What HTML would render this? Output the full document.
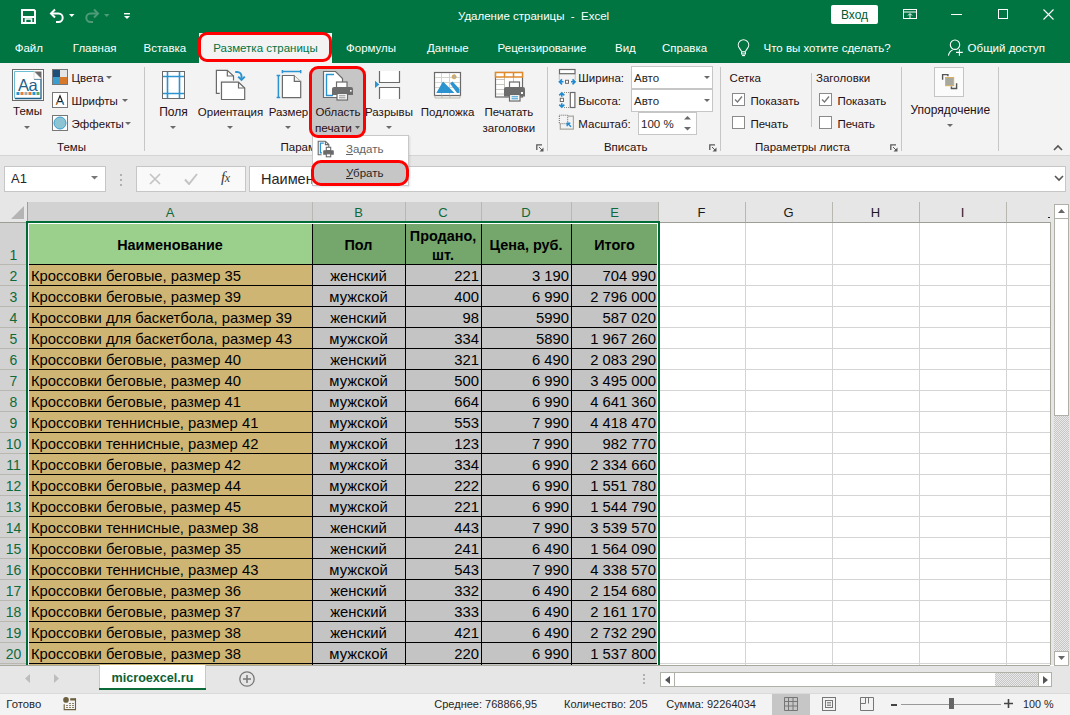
<!DOCTYPE html>
<html><head><meta charset="utf-8"><style>
*{margin:0;padding:0}
html,body{width:1070px;height:715px;overflow:hidden;background:#fff;position:relative}
body>div,body>svg{position:absolute}
.t{position:absolute;white-space:nowrap;line-height:1.15;font-family:"Liberation Sans",sans-serif}
</style></head><body>
<div style="left:0px;top:0px;width:1070px;height:63px;background:#007542"></div>
<svg style="position:absolute;left:21px;top:9px" width="15" height="15" viewBox="0 0 15 15"><path d="M1 1h12l1 1v12H1z" fill="none" stroke="#fff" stroke-width="2"/><path d="M1 8h13" stroke="#fff" stroke-width="2"/><path d="M4.5 14v-4h6v4" fill="none" stroke="#fff" stroke-width="1.6"/></svg>
<svg style="position:absolute;left:49px;top:8px" width="16" height="15" viewBox="0 0 16 15"><path d="M2 5.5h7.5a4.2 4.2 0 0 1 0 8.4H7" fill="none" stroke="#fff" stroke-width="2"/><path d="M6 1.5L2 5.5l4 4" fill="none" stroke="#fff" stroke-width="2"/></svg>
<svg style="position:absolute;left:69px;top:14px" width="6" height="4" viewBox="0 0 6 4"><path d="M0 0h5.5l-2.75 3z" fill="#fff"/></svg>
<svg style="position:absolute;left:84px;top:8px" width="16" height="15" viewBox="0 0 16 15"><path d="M14 5.5H6.5a4.2 4.2 0 0 0 0 8.4H9" fill="none" stroke="#4f9a78" stroke-width="2"/><path d="M10 1.5l4 4-4 4" fill="none" stroke="#4f9a78" stroke-width="2"/></svg>
<svg style="position:absolute;left:104px;top:14px" width="6" height="4" viewBox="0 0 6 4"><path d="M0 0h5.5l-2.75 3z" fill="#4f9a78"/></svg>
<svg style="position:absolute;left:124px;top:13px" width="6" height="7" viewBox="0 0 6 7"><rect x="0" y="0" width="6" height="1.4" fill="#fff"/><path d="M0 3h6l-3 3z" fill="#fff"/></svg>
<div class="t" style="left:458px;top:9.59px;font-size:11.5px;color:#fff;">Удаление страницы &nbsp;- &nbsp;Excel</div>
<div style="left:831px;top:5px;width:47px;height:19px;background:#fff;border-radius:2px"></div>
<div class="t" style="left:654.5px;width:400px;text-align:center;top:8.64px;font-size:12px;color:#005c30;">Вход</div>
<svg style="position:absolute;left:903px;top:9px" width="15" height="11" viewBox="0 0 15 11"><rect x="0.5" y="0.5" width="13" height="9" fill="none" stroke="#fff"/><path d="M1 3h12" stroke="#fff"/><path d="M7 9V5M5 6.5l2-2 2 2" fill="none" stroke="#fff"/></svg>
<div style="left:951px;top:14px;width:11px;height:1px;background:#fff"></div>
<div style="left:998px;top:9px;width:10px;height:10px;border:1px solid #fff;box-sizing:border-box"></div>
<svg style="position:absolute;left:1043px;top:9px" width="11" height="11" viewBox="0 0 11 11"><path d="M0.5 0.5l10 10M10.5 0.5l-10 10" stroke="#fff" stroke-width="1.1"/></svg>
<div class="t" style="left:14.7px;top:41.59px;font-size:11.5px;color:#fff;">Файл</div>
<div class="t" style="left:72.8px;top:41.59px;font-size:11.5px;color:#fff;">Главная</div>
<div class="t" style="left:143.5px;top:41.59px;font-size:11.5px;color:#fff;">Вставка</div>
<div class="t" style="left:346px;top:41.59px;font-size:11.5px;color:#fff;">Формулы</div>
<div class="t" style="left:427px;top:41.59px;font-size:11.5px;color:#fff;">Данные</div>
<div class="t" style="left:497.6px;top:41.59px;font-size:11.5px;color:#fff;">Рецензирование</div>
<div class="t" style="left:615px;top:41.59px;font-size:11.5px;color:#fff;">Вид</div>
<div class="t" style="left:662px;top:41.59px;font-size:11.5px;color:#fff;">Справка</div>
<div style="left:199px;top:33px;width:133px;height:30px;background:#f3f3f3"></div>
<div class="t" style="left:65.5px;width:400px;text-align:center;top:41.59px;font-size:11.5px;color:#007542;">Разметка страницы</div>
<div style="left:198px;top:32px;width:134px;height:30px;border:3px solid #ff0000;border-radius:9px;box-sizing:border-box"></div>
<svg style="position:absolute;left:737px;top:39px" width="13" height="18" viewBox="0 0 13 18"><path d="M4.5 12.2L2.4 9.2A5.2 5.2 0 1 1 10.6 9.2L8.5 12.2" fill="none" stroke="#fff" stroke-width="1.1"/><rect x="4.6" y="12.8" width="3.8" height="2.2" fill="none" stroke="#fff" stroke-width="1.1"/><path d="M5 16.6h3" stroke="#fff" stroke-width="1.1"/></svg>
<div class="t" style="left:763.5px;top:41.59px;font-size:11.5px;color:#fff;">Что вы хотите сделать?</div>
<svg style="position:absolute;left:947px;top:39px" width="17" height="18" viewBox="0 0 17 18"><circle cx="8" cy="5.7" r="4.7" fill="none" stroke="#fff" stroke-width="1.1"/><path d="M1.4 16.6Q2.2 12.2 5.6 10.9" fill="none" stroke="#fff" stroke-width="1.1"/><path d="M9 13.4h6.8M12.4 10.2v6.6" stroke="#fff" stroke-width="1.1"/></svg>
<div class="t" style="left:967.6px;top:41.59px;font-size:11.5px;color:#fff;">Общий доступ</div>
<div style="left:0px;top:63px;width:1070px;height:92px;background:#f3f3f3"></div>
<div style="left:0px;top:155px;width:1070px;height:1px;background:#d5d5d5"></div>
<div style="left:144px;top:67px;width:1px;height:84px;background:#c6c6c6"></div>
<div style="left:547px;top:67px;width:1px;height:84px;background:#c6c6c6"></div>
<div style="left:720px;top:67px;width:1px;height:84px;background:#c6c6c6"></div>
<div style="left:901px;top:67px;width:1px;height:84px;background:#c6c6c6"></div>
<div style="left:998px;top:67px;width:1px;height:84px;background:#c6c6c6"></div>
<svg style="position:absolute;left:12px;top:69px" width="32" height="32" viewBox="0 0 32 32"><rect x="0.5" y="0.5" width="31" height="31" fill="#fff" stroke="#6a6a6a"/><path d="M2.5 29.5V2.5H22" fill="none" stroke="#5ab8d0" stroke-width="0.9"/><path d="M22 10H29V29.5H3" fill="none" stroke="#1f5f8a" stroke-width="1.3"/><path d="M22 2.5H29.5V10z" fill="#6a6a6a"/><path d="M22 2.5V10H29.5z" fill="#fff" stroke="#bbb" stroke-width="0.5"/><text x="6" y="21.5" font-family="Liberation Sans" font-size="16.5" fill="#1f5f8a" letter-spacing="-0.6">Aa</text><rect x="4.5" y="23" width="3" height="3" fill="#2b93cf"/><rect x="8.5" y="23" width="3" height="3" fill="#e07f2f"/><rect x="12.5" y="23" width="3" height="3" fill="#aaa"/><rect x="16.5" y="23" width="3" height="3" fill="#e07f2f"/><rect x="20.5" y="23" width="3" height="3" fill="#2b93cf"/><rect x="24.5" y="23" width="3" height="3" fill="#5ea65e"/></svg>
<div class="t" style="left:-172.5px;width:400px;text-align:center;top:104.59px;font-size:11.5px;color:#261014;">Темы</div>
<svg style="position:absolute;left:24px;top:126px" width="7" height="4" viewBox="0 0 7 4"><path d="M0 0h6l-3 3z" fill="#6a6a6a"/></svg>
<svg style="position:absolute;left:52px;top:69px" width="16" height="16" viewBox="0 0 16 16"><rect x="0" y="0" width="8" height="8" fill="#1d4f7a"/><rect x="8" y="0" width="8" height="8" fill="#e5e5e5"/><rect x="0" y="8" width="8" height="8" fill="#3a9ed0"/><rect x="8" y="8" width="8" height="8" fill="#d8782a"/><rect x="0.5" y="0.5" width="15" height="15" fill="none" stroke="#777"/></svg>
<div class="t" style="left:71.6px;top:71.59px;font-size:11.5px;color:#261014;">Цвета</div>
<svg style="position:absolute;left:106px;top:76px" width="6" height="4" viewBox="0 0 6 4"><path d="M0 0h6l-3 3z" fill="#6a6a6a"/></svg>
<svg style="position:absolute;left:52px;top:92px" width="16" height="16" viewBox="0 0 16 16"><rect x="0.5" y="0.5" width="15" height="15" fill="#fff" stroke="#777"/><path d="M4.3 12.8L8 3.8l3.7 9M5.6 9.6h4.8" fill="none" stroke="#1d1d1d" stroke-width="1.2"/><path d="M4.3 12.8l1.3-3.2" stroke="#e07f2f" stroke-width="1.2"/><path d="M11.7 12.8l-1.3-3.2" stroke="#2b93cf" stroke-width="1.2"/></svg>
<div class="t" style="left:71.6px;top:94.59px;font-size:11.5px;color:#261014;">Шрифты</div>
<svg style="position:absolute;left:122px;top:99px" width="6" height="4" viewBox="0 0 6 4"><path d="M0 0h6l-3 3z" fill="#6a6a6a"/></svg>
<svg style="position:absolute;left:52px;top:115px" width="16" height="16" viewBox="0 0 16 16"><rect x="0.5" y="0.5" width="15" height="15" fill="#fff" stroke="#777"/><circle cx="8" cy="8" r="6" fill="#8cc4d4" stroke="#3a9ed0"/></svg>
<div class="t" style="left:71.6px;top:117.59px;font-size:11.5px;color:#261014;">Эффекты</div>
<svg style="position:absolute;left:125px;top:122px" width="6" height="4" viewBox="0 0 6 4"><path d="M0 0h6l-3 3z" fill="#6a6a6a"/></svg>
<div class="t" style="left:-128.5px;width:400px;text-align:center;top:140.59px;font-size:11.5px;color:#261014;">Темы</div>
<svg style="position:absolute;left:162px;top:71px" width="23" height="28" viewBox="0 0 23 28"><rect x="0.5" y="0.5" width="22" height="27" fill="#fff" stroke="#6a6a6a"/><path d="M5.5 1v26M17.5 1v26M1 5.5h21M1 22.5h21" stroke="#2b93cf" stroke-width="1.6"/></svg>
<div class="t" style="left:-26.5px;width:400px;text-align:center;top:106.14px;font-size:12px;color:#261014;">Поля</div>
<svg style="position:absolute;left:170px;top:126px" width="7" height="4" viewBox="0 0 7 4"><path d="M0 0h6l-3 3z" fill="#6a6a6a"/></svg>
<svg style="position:absolute;left:214px;top:69px" width="33" height="33" viewBox="0 0 33 33"><path d="M2.4 1.4H13.3L19.5 7V24.4H2.4Z" fill="#fff" stroke="#6a6a6a" stroke-width="1.2"/><path d="M13.3 1.4V7H19.5" fill="none" stroke="#6a6a6a" stroke-width="1.2"/><path d="M7.5 13.2H24.5L30.7 19V30.5H7.5Z" fill="#fff" stroke="#f3f3f3" stroke-width="3.5"/><path d="M7.5 13.2H24.5L30.7 19V30.5H7.5Z" fill="#fff" stroke="#6a6a6a" stroke-width="1.2"/><path d="M24.5 13.2V19H30.7" fill="none" stroke="#6a6a6a" stroke-width="1.2"/><path d="M21.2 3H23.2A4.3 4.3 0 0 1 27.5 7.3V10.5" fill="none" stroke="#2b93cf" stroke-width="2"/><path d="M24.2 7.6L27.5 10.9L30.8 7.6" fill="none" stroke="#2b93cf" stroke-width="2"/></svg>
<div class="t" style="left:30.5px;width:400px;text-align:center;top:105.59px;font-size:11.5px;color:#261014;">Ориентация</div>
<svg style="position:absolute;left:227px;top:126px" width="7" height="4" viewBox="0 0 7 4"><path d="M0 0h6l-3 3z" fill="#6a6a6a"/></svg>
<svg style="position:absolute;left:276px;top:70px" width="28" height="30" viewBox="0 0 28 30"><path d="M6.4 5.5H18.3V11.3H24.7V27.6H6.4Z" fill="#fff" stroke="#6a6a6a" stroke-width="1.2"/><path d="M18.3 5.5L24.7 11.3" stroke="#a8a8a0" stroke-width="1"/><path d="M6.4 1.6H24.7M6.4 0V3.2M24.7 0V3.2M2.4 5.5V27.6M0.6 5.5H4.2M0.6 27.6H4.2" fill="none" stroke="#2b93cf" stroke-width="1.5"/></svg>
<div class="t" style="left:88.5px;width:400px;text-align:center;top:105.59px;font-size:11.5px;color:#261014;">Размер</div>
<svg style="position:absolute;left:285px;top:126px" width="7" height="4" viewBox="0 0 7 4"><path d="M0 0h6l-3 3z" fill="#6a6a6a"/></svg>
<div style="left:310px;top:67px;width:55px;height:70px;background:#c6c6c6;border-radius:7px"></div>
<svg style="position:absolute;left:322px;top:70px" width="33" height="32" viewBox="0 0 33 32"><path d="M1.5 1.5h12l7 7v19h-19z" fill="#fff" stroke="#6a6a6a" stroke-width="1.2"/><path d="M12 4.5H4.5V25.5H11" fill="none" stroke="#2b93cf" stroke-width="1.4"/><rect x="14.5" y="12" width="10.5" height="6" fill="#fff" stroke="#6a6a6a" stroke-width="1.2"/><path d="M13 18.5h13" stroke="#2b93cf" stroke-width="1.4"/><path d="M12 17h17a2 2 0 0 1 2 2v6H10v-6a2 2 0 0 1 2-2z" fill="#6d6d6d"/><rect x="15" y="23.5" width="10.5" height="6.5" fill="#fff" stroke="#6a6a6a" stroke-width="1.2"/><path d="M17 25.8h6.5M17 27.8h6.5" stroke="#6a6a6a" stroke-width="0.8"/><rect x="28" y="20" width="1.6" height="1.6" fill="#fff"/></svg>
<div class="t" style="left:138px;width:400px;text-align:center;top:105.59px;font-size:11.5px;color:#261014;">Область</div>
<div class="t" style="left:133.39999999999998px;width:400px;text-align:center;top:121.91999999999999px;font-size:11.8px;color:#261014;">печати</div>
<svg style="position:absolute;left:355px;top:126px" width="6" height="4" viewBox="0 0 6 4"><path d="M0 0h5l-2.5 3z" fill="#555"/></svg>
<svg style="position:absolute;left:374px;top:70px" width="27" height="30" viewBox="0 0 27 30"><rect x="5.5" y="1" width="20" height="11.5" fill="#fff"/><rect x="5.5" y="17.5" width="20" height="11.5" fill="#fff"/><path d="M5.5 1V12.5H25.5V1M5.5 29V17.5H25.5V29" fill="none" stroke="#6a6a6a" stroke-width="1.2"/><path d="M1 10.8L5.3 14.4L1 18z" fill="#2b93cf"/></svg>
<div class="t" style="left:189px;width:400px;text-align:center;top:105.59px;font-size:11.5px;color:#261014;">Разрывы</div>
<svg style="position:absolute;left:386px;top:126px" width="7" height="4" viewBox="0 0 7 4"><path d="M0 0h6l-3 3z" fill="#6a6a6a"/></svg>
<svg style="position:absolute;left:433px;top:71px" width="30" height="29" viewBox="0 0 30 29"><rect x="1.5" y="1.5" width="26" height="23" fill="#fff" stroke="#6a6a6a" stroke-width="1.2"/><path d="M8.5 2v22M16.5 2v22M2 6.5h25M2 11.5h25M2 16.5h25" stroke="#d0d0c8" stroke-width="0.9"/><path d="M3.3 22L10 10.4L21.5 22z" fill="#2b93cf"/><path d="M17 12.5L19.5 10.5L26.5 18V22H24z" fill="#2b93cf"/><circle cx="21.1" cy="5.8" r="2" fill="#b0b0a8" stroke="#d8a848" stroke-width="1"/><path d="M2 24.5v2.5h25v-2.5M9 24.5v2.5M17 24.5v2.5" fill="none" stroke="#b8b8a8" stroke-width="0.9"/></svg>
<div class="t" style="left:247.60000000000002px;width:400px;text-align:center;top:105.59px;font-size:11.5px;color:#261014;">Подложка</div>
<svg style="position:absolute;left:494px;top:71px" width="32" height="31" viewBox="0 0 32 31"><rect x="1.5" y="1.5" width="27" height="24.5" fill="#fff" stroke="#6a6a6a" stroke-width="1.2"/><path d="M2 8.5h9M2 13.5h9M2 18.5h9M2 23h9M10.5 6v13M19.5 6v6" stroke="#c0c0b8" stroke-width="0.9"/><rect x="1.5" y="1.5" width="27" height="4.5" fill="#fff" stroke="#e08a2c" stroke-width="1.5"/><path d="M10.5 1.5v4.5M19.5 1.5v4.5" stroke="#e08a2c" stroke-width="1.5"/><rect x="15.5" y="11" width="10" height="7.5" fill="#fff" stroke="#6a6a6a" stroke-width="1.2"/><path d="M14 18.5h13" stroke="#2b93cf" stroke-width="1.4"/><path d="M12 16h17a2 2 0 0 1 2 2v7.5H10V18a2 2 0 0 1 2-2z" fill="#6d6d6d"/><rect x="15.5" y="23.5" width="10.5" height="6.5" fill="#fff" stroke="#6a6a6a" stroke-width="1.2"/><path d="M17.5 25.8h6.5M17.5 27.8h6.5" stroke="#2b93cf" stroke-width="1"/><rect x="27" y="21" width="2" height="2" fill="#fff"/></svg>
<div class="t" style="left:308.9px;width:400px;text-align:center;top:105.59px;font-size:11.5px;color:#261014;">Печатать</div>
<div class="t" style="left:308.8px;width:400px;text-align:center;top:121.59px;font-size:11.5px;color:#261014;">заголовки</div>
<div class="t" style="left:280.5px;top:140.59px;font-size:11.5px;color:#261014;">Параметры страницы</div>
<svg style="position:absolute;left:536px;top:144px" width="8" height="8" viewBox="0 0 8 8"><path d="M0.8 6V0.8H6" fill="none" stroke="#5a5a5a" stroke-width="1.3"/><path d="M7.5 3.5V7.5H3.5z" fill="#5a5a5a"/><path d="M3 3l3 3" stroke="#5a5a5a" stroke-width="1"/></svg>
<svg style="position:absolute;left:558px;top:68px" width="19" height="18" viewBox="0 0 19 18"><rect x="1.5" y="1.5" width="15.5" height="4.2" fill="#fff" stroke="#6a6a6a" stroke-width="1.2"/><path d="M1.3 6.5v6M17.2 6.5v6" stroke="#8a8a8a" stroke-dasharray="1 1" stroke-width="1"/><path d="M1.5 13.8H5.5M13 13.8H17M4 11.3L1.4 13.8L4 16.3M14.5 11.3L17.1 13.8L14.5 16.3" fill="none" stroke="#1f8ad0" stroke-width="1.6"/><rect x="7.5" y="12.3" width="3" height="3" fill="#fff" stroke="#6a6a6a" stroke-width="1"/></svg>
<div class="t" style="left:578.3px;top:71.59px;font-size:11.5px;color:#261014;">Ширина:</div>
<svg style="position:absolute;left:558px;top:91px" width="19" height="18" viewBox="0 0 19 18"><rect x="12.3" y="1.5" width="4.6" height="15" fill="#fff" stroke="#6a6a6a" stroke-width="1.2"/><path d="M6 1.5h5.5M6 16.5h5.5" stroke="#8a8a8a" stroke-dasharray="1 1" stroke-width="1"/><path d="M3.8 2V5.8M3.8 12.2V16M1.3 4.4L3.8 1.8L6.3 4.4M1.3 13.6L3.8 16.2L6.3 13.6" fill="none" stroke="#1f8ad0" stroke-width="1.6"/><rect x="2.3" y="7.3" width="3.2" height="3.2" fill="#fff" stroke="#6a6a6a" stroke-width="1"/></svg>
<div class="t" style="left:578.3px;top:94.59px;font-size:11.5px;color:#261014;">Высота:</div>
<svg style="position:absolute;left:558px;top:114px" width="17" height="17" viewBox="0 0 17 17"><path d="M9.7 2.2H15.4V15.1H2.3V9.8" fill="none" stroke="#a8a8a0" stroke-width="1.2"/><rect x="1.3" y="1.2" width="8.4" height="8.5" fill="#f3f3f3" stroke="#6a6a6a" stroke-dasharray="1 1" stroke-width="1"/><path d="M13.1 12.7L9.4 9.2M9.2 12.3V9.2H12.3" fill="none" stroke="#1f8ad0" stroke-width="1.4"/></svg>
<div class="t" style="left:578.3px;top:117.59px;font-size:11.5px;color:#261014;">Масштаб:</div>
<div style="left:631px;top:66px;width:82px;height:23px;background:#fff;border:1px solid #c6c6c6;box-sizing:border-box"></div>
<div class="t" style="left:634px;top:71.59px;font-size:11.5px;color:#262626;">Авто</div>
<svg style="position:absolute;left:704px;top:76px" width="6" height="4" viewBox="0 0 6 4"><path d="M0 0h6l-3 3z" fill="#6a6a6a"/></svg>
<div style="left:631px;top:89px;width:82px;height:23px;background:#fff;border:1px solid #c6c6c6;box-sizing:border-box"></div>
<div class="t" style="left:634px;top:94.59px;font-size:11.5px;color:#262626;">Авто</div>
<svg style="position:absolute;left:704px;top:99px" width="6" height="4" viewBox="0 0 6 4"><path d="M0 0h6l-3 3z" fill="#6a6a6a"/></svg>
<div style="left:638px;top:112px;width:59px;height:23px;background:#fff;border:1px solid #c6c6c6;box-sizing:border-box"></div>
<div class="t" style="left:641px;top:117.59px;font-size:11.5px;color:#262626;">100 %</div>
<svg style="position:absolute;left:684px;top:116px" width="7" height="15" viewBox="0 0 7 15"><path d="M0 3.5L3.5 0L7 3.5z" fill="#6a6a6a"/><path d="M0 11L3.5 14.5L7 11z" fill="#6a6a6a"/></svg>
<div class="t" style="left:425.70000000000005px;width:400px;text-align:center;top:140.59px;font-size:11.5px;color:#261014;">Вписать</div>
<svg style="position:absolute;left:709px;top:144px" width="8" height="8" viewBox="0 0 8 8"><path d="M0.8 6V0.8H6" fill="none" stroke="#5a5a5a" stroke-width="1.3"/><path d="M7.5 3.5V7.5H3.5z" fill="#5a5a5a"/><path d="M3 3l3 3" stroke="#5a5a5a" stroke-width="1"/></svg>
<div class="t" style="left:729.6px;top:71.59px;font-size:11.5px;color:#261014;">Сетка</div>
<div class="t" style="left:816px;top:71.59px;font-size:11.5px;color:#261014;">Заголовки</div>
<div style="left:732px;top:93px;width:13px;height:13px;background:#fff;border:1px solid #8a8a8a;box-sizing:border-box"></div>
<svg style="position:absolute;left:734px;top:95px" width="9" height="9" viewBox="0 0 9 9"><path d="M1 4.5l2.5 2.5L8 1.5" fill="none" stroke="#777" stroke-width="1.3"/></svg>
<div style="left:732px;top:116px;width:13px;height:13px;background:#fff;border:1px solid #8a8a8a;box-sizing:border-box"></div>
<div style="left:819px;top:93px;width:13px;height:13px;background:#fff;border:1px solid #8a8a8a;box-sizing:border-box"></div>
<svg style="position:absolute;left:821px;top:95px" width="9" height="9" viewBox="0 0 9 9"><path d="M1 4.5l2.5 2.5L8 1.5" fill="none" stroke="#777" stroke-width="1.3"/></svg>
<div style="left:819px;top:116px;width:13px;height:13px;background:#fff;border:1px solid #8a8a8a;box-sizing:border-box"></div>
<div class="t" style="left:750.5px;top:94.59px;font-size:11.5px;color:#261014;">Показать</div>
<div class="t" style="left:750.5px;top:117.59px;font-size:11.5px;color:#261014;">Печать</div>
<div class="t" style="left:837.4px;top:94.59px;font-size:11.5px;color:#261014;">Показать</div>
<div class="t" style="left:837.4px;top:117.59px;font-size:11.5px;color:#261014;">Печать</div>
<div style="left:811px;top:73px;width:1px;height:54px;background:#c6c6c6"></div>
<div class="t" style="left:602.5px;width:400px;text-align:center;top:140.59px;font-size:11.5px;color:#261014;">Параметры листа</div>
<svg style="position:absolute;left:890px;top:144px" width="8" height="8" viewBox="0 0 8 8"><path d="M0.8 6V0.8H6" fill="none" stroke="#5a5a5a" stroke-width="1.3"/><path d="M7.5 3.5V7.5H3.5z" fill="#5a5a5a"/><path d="M3 3l3 3" stroke="#5a5a5a" stroke-width="1"/></svg>
<div style="left:934px;top:67px;width:30px;height:30px;background:#fbfbfb;border:1px solid #c4c4c4;box-sizing:border-box"></div>
<svg style="position:absolute;left:940px;top:72px" width="20" height="20" viewBox="0 0 20 20"><path d="M2.6 7.8V2.6H7.9V4.2" fill="none" stroke="#555" stroke-width="1.4"/><rect x="5.5" y="5.5" width="8.2" height="8.2" fill="#a8a89e" stroke="#d8b060" stroke-width="1"/><path d="M11.4 14.4V16.5H16.6V11.3" fill="none" stroke="#555" stroke-width="1.4"/></svg>
<div class="t" style="left:750.3px;width:400px;text-align:center;top:104.14px;font-size:12px;color:#261014;">Упорядочение</div>
<svg style="position:absolute;left:947px;top:124px" width="7" height="4" viewBox="0 0 7 4"><path d="M0 0h6l-3 3z" fill="#6a6a6a"/></svg>
<svg style="position:absolute;left:1053px;top:144px" width="10" height="7" viewBox="0 0 10 7"><path d="M1 6l4-4 4 4" fill="none" stroke="#555" stroke-width="1.6"/></svg>
<div style="left:0px;top:156px;width:1070px;height:46px;background:#e6e6e6"></div>
<div style="left:4px;top:166px;width:102px;height:26px;background:#fff;border:1px solid #c6c6c6;box-sizing:border-box"></div>
<div class="t" style="left:11px;top:172.23px;font-size:13px;color:#262626;">A1</div>
<svg style="position:absolute;left:91px;top:176px" width="8" height="4" viewBox="0 0 8 4"><path d="M0 0h7l-3.5 3.5z" fill="#777"/></svg>
<div style="left:120px;top:174px;width:2px;height:2px;background:#b0b0b0"></div>
<div style="left:120px;top:179px;width:2px;height:2px;background:#b0b0b0"></div>
<div style="left:120px;top:184px;width:2px;height:2px;background:#b0b0b0"></div>
<div style="left:136px;top:166px;width:110px;height:26px;background:#f9f9f9;border:1px solid #c6c6c6;box-sizing:border-box"></div>
<svg style="position:absolute;left:149px;top:173px" width="12" height="12" viewBox="0 0 12 12"><path d="M1 1l10 10M11 1L1 11" stroke="#c4c4c4" stroke-width="1.7"/></svg>
<svg style="position:absolute;left:184px;top:173px" width="14" height="12" viewBox="0 0 14 12"><path d="M1 6.5l4 4.5 8-10" fill="none" stroke="#c4c4c4" stroke-width="2"/></svg>
<div class="t" style="left:221px;top:169px;font-family:'Liberation Serif',serif;font-style:italic;font-size:15px;color:#3a3a3a">f<span style="font-size:12px;margin-left:-0.5px">x</span></div>
<div style="left:249px;top:166px;width:817px;height:26px;background:#fff;border:1px solid #c6c6c6;box-sizing:border-box"></div>
<div class="t" style="left:261px;top:170.88px;font-size:14.5px;color:#262626;">Наименование</div>
<svg style="position:absolute;left:1054px;top:175px" width="10" height="7" viewBox="0 0 10 7"><path d="M1 1l4 4 4-4" fill="none" stroke="#555" stroke-width="1.6"/></svg>
<div style="left:0px;top:202px;width:1050px;height:463px;background:#fff"></div>
<div style="left:0px;top:202px;width:1050px;height:20px;background:#e6e6e6"></div>
<div style="left:28px;top:202px;width:630px;height:20px;background:#d2d2d2"></div>
<div style="left:0px;top:222px;width:1050px;height:1px;background:#9e9e96"></div>
<div style="left:0px;top:223px;width:27px;height:442px;background:#d2d2d2"></div>
<div style="left:27px;top:202px;width:1px;height:463px;background:#9e9e96"></div>
<svg style="position:absolute;left:11px;top:206px" width="13" height="13" viewBox="0 0 13 13"><path d="M13 0v13H0z" fill="#b4b4b4"/></svg>
<div style="left:312px;top:202px;width:1px;height:20px;background:#b8b8b0"></div>
<div class="t" style="left:-30.0px;width:400px;text-align:center;top:206.23px;font-size:13px;color:#0f6a3a;">A</div>
<div style="left:405px;top:202px;width:1px;height:20px;background:#b8b8b0"></div>
<div class="t" style="left:158.5px;width:400px;text-align:center;top:206.23px;font-size:13px;color:#0f6a3a;">B</div>
<div style="left:481px;top:202px;width:1px;height:20px;background:#b8b8b0"></div>
<div class="t" style="left:243.0px;width:400px;text-align:center;top:206.23px;font-size:13px;color:#0f6a3a;">C</div>
<div style="left:571px;top:202px;width:1px;height:20px;background:#b8b8b0"></div>
<div class="t" style="left:326.0px;width:400px;text-align:center;top:206.23px;font-size:13px;color:#0f6a3a;">D</div>
<div style="left:658px;top:202px;width:1px;height:20px;background:#b8b8b0"></div>
<div class="t" style="left:414.5px;width:400px;text-align:center;top:206.23px;font-size:13px;color:#0f6a3a;">E</div>
<div style="left:745px;top:202px;width:1px;height:20px;background:#b8b8b0"></div>
<div class="t" style="left:501.5px;width:400px;text-align:center;top:206.23px;font-size:13px;color:#1a1a1a;">F</div>
<div style="left:832px;top:202px;width:1px;height:20px;background:#b8b8b0"></div>
<div class="t" style="left:588.5px;width:400px;text-align:center;top:206.23px;font-size:13px;color:#1a1a1a;">G</div>
<div style="left:919px;top:202px;width:1px;height:20px;background:#b8b8b0"></div>
<div class="t" style="left:675.5px;width:400px;text-align:center;top:206.23px;font-size:13px;color:#1a1a1a;">H</div>
<div style="left:1006px;top:202px;width:1px;height:20px;background:#b8b8b0"></div>
<div class="t" style="left:762.5px;width:400px;text-align:center;top:206.23px;font-size:13px;color:#1a1a1a;">I</div>
<div style="left:0px;top:264px;width:27px;height:1px;background:#b8b8b0"></div>
<div class="t" style="left:-186.5px;width:400px;text-align:center;top:247.33px;font-size:14px;color:#0f6a3a;">1</div>
<div style="left:0px;top:285px;width:27px;height:1px;background:#b8b8b0"></div>
<div class="t" style="left:-186.5px;width:400px;text-align:center;top:268.33px;font-size:14px;color:#0f6a3a;">2</div>
<div style="left:0px;top:306px;width:27px;height:1px;background:#b8b8b0"></div>
<div class="t" style="left:-186.5px;width:400px;text-align:center;top:289.33px;font-size:14px;color:#0f6a3a;">3</div>
<div style="left:0px;top:327px;width:27px;height:1px;background:#b8b8b0"></div>
<div class="t" style="left:-186.5px;width:400px;text-align:center;top:310.33px;font-size:14px;color:#0f6a3a;">4</div>
<div style="left:0px;top:348px;width:27px;height:1px;background:#b8b8b0"></div>
<div class="t" style="left:-186.5px;width:400px;text-align:center;top:331.33px;font-size:14px;color:#0f6a3a;">5</div>
<div style="left:0px;top:369px;width:27px;height:1px;background:#b8b8b0"></div>
<div class="t" style="left:-186.5px;width:400px;text-align:center;top:352.33px;font-size:14px;color:#0f6a3a;">6</div>
<div style="left:0px;top:390px;width:27px;height:1px;background:#b8b8b0"></div>
<div class="t" style="left:-186.5px;width:400px;text-align:center;top:373.33px;font-size:14px;color:#0f6a3a;">7</div>
<div style="left:0px;top:411px;width:27px;height:1px;background:#b8b8b0"></div>
<div class="t" style="left:-186.5px;width:400px;text-align:center;top:394.33px;font-size:14px;color:#0f6a3a;">8</div>
<div style="left:0px;top:432px;width:27px;height:1px;background:#b8b8b0"></div>
<div class="t" style="left:-186.5px;width:400px;text-align:center;top:415.33px;font-size:14px;color:#0f6a3a;">9</div>
<div style="left:0px;top:453px;width:27px;height:1px;background:#b8b8b0"></div>
<div class="t" style="left:-186.5px;width:400px;text-align:center;top:436.33px;font-size:14px;color:#0f6a3a;">10</div>
<div style="left:0px;top:474px;width:27px;height:1px;background:#b8b8b0"></div>
<div class="t" style="left:-186.5px;width:400px;text-align:center;top:457.33px;font-size:14px;color:#0f6a3a;">11</div>
<div style="left:0px;top:495px;width:27px;height:1px;background:#b8b8b0"></div>
<div class="t" style="left:-186.5px;width:400px;text-align:center;top:478.33px;font-size:14px;color:#0f6a3a;">12</div>
<div style="left:0px;top:516px;width:27px;height:1px;background:#b8b8b0"></div>
<div class="t" style="left:-186.5px;width:400px;text-align:center;top:499.33px;font-size:14px;color:#0f6a3a;">13</div>
<div style="left:0px;top:537px;width:27px;height:1px;background:#b8b8b0"></div>
<div class="t" style="left:-186.5px;width:400px;text-align:center;top:520.33px;font-size:14px;color:#0f6a3a;">14</div>
<div style="left:0px;top:558px;width:27px;height:1px;background:#b8b8b0"></div>
<div class="t" style="left:-186.5px;width:400px;text-align:center;top:541.33px;font-size:14px;color:#0f6a3a;">15</div>
<div style="left:0px;top:579px;width:27px;height:1px;background:#b8b8b0"></div>
<div class="t" style="left:-186.5px;width:400px;text-align:center;top:562.33px;font-size:14px;color:#0f6a3a;">16</div>
<div style="left:0px;top:600px;width:27px;height:1px;background:#b8b8b0"></div>
<div class="t" style="left:-186.5px;width:400px;text-align:center;top:583.33px;font-size:14px;color:#0f6a3a;">17</div>
<div style="left:0px;top:621px;width:27px;height:1px;background:#b8b8b0"></div>
<div class="t" style="left:-186.5px;width:400px;text-align:center;top:604.33px;font-size:14px;color:#0f6a3a;">18</div>
<div style="left:0px;top:642px;width:27px;height:1px;background:#b8b8b0"></div>
<div class="t" style="left:-186.5px;width:400px;text-align:center;top:625.33px;font-size:14px;color:#0f6a3a;">19</div>
<div style="left:0px;top:663px;width:27px;height:1px;background:#b8b8b0"></div>
<div class="t" style="left:-186.5px;width:400px;text-align:center;top:646.33px;font-size:14px;color:#0f6a3a;">20</div>
<div style="left:745px;top:223px;width:1px;height:442px;background:#d4d4d4"></div>
<div style="left:832px;top:223px;width:1px;height:442px;background:#d4d4d4"></div>
<div style="left:919px;top:223px;width:1px;height:442px;background:#d4d4d4"></div>
<div style="left:1006px;top:223px;width:1px;height:442px;background:#d4d4d4"></div>
<div style="left:1050px;top:223px;width:1px;height:442px;background:#d4d4d4"></div>
<div style="left:658px;top:264px;width:392px;height:1px;background:#d4d4d4"></div>
<div style="left:658px;top:285px;width:392px;height:1px;background:#d4d4d4"></div>
<div style="left:658px;top:306px;width:392px;height:1px;background:#d4d4d4"></div>
<div style="left:658px;top:327px;width:392px;height:1px;background:#d4d4d4"></div>
<div style="left:658px;top:348px;width:392px;height:1px;background:#d4d4d4"></div>
<div style="left:658px;top:369px;width:392px;height:1px;background:#d4d4d4"></div>
<div style="left:658px;top:390px;width:392px;height:1px;background:#d4d4d4"></div>
<div style="left:658px;top:411px;width:392px;height:1px;background:#d4d4d4"></div>
<div style="left:658px;top:432px;width:392px;height:1px;background:#d4d4d4"></div>
<div style="left:658px;top:453px;width:392px;height:1px;background:#d4d4d4"></div>
<div style="left:658px;top:474px;width:392px;height:1px;background:#d4d4d4"></div>
<div style="left:658px;top:495px;width:392px;height:1px;background:#d4d4d4"></div>
<div style="left:658px;top:516px;width:392px;height:1px;background:#d4d4d4"></div>
<div style="left:658px;top:537px;width:392px;height:1px;background:#d4d4d4"></div>
<div style="left:658px;top:558px;width:392px;height:1px;background:#d4d4d4"></div>
<div style="left:658px;top:579px;width:392px;height:1px;background:#d4d4d4"></div>
<div style="left:658px;top:600px;width:392px;height:1px;background:#d4d4d4"></div>
<div style="left:658px;top:621px;width:392px;height:1px;background:#d4d4d4"></div>
<div style="left:658px;top:642px;width:392px;height:1px;background:#d4d4d4"></div>
<div style="left:658px;top:663px;width:392px;height:1px;background:#d4d4d4"></div>
<div style="left:28px;top:223px;width:284px;height:41px;background:#9bd08c"></div>
<div style="left:312px;top:223px;width:346px;height:41px;background:#75a66b"></div>
<div style="left:28px;top:265px;width:284px;height:400px;background:#cfb574"></div>
<div style="left:312px;top:265px;width:346px;height:400px;background:#c4c4c4"></div>
<div style="left:28px;top:264px;width:630px;height:1px;background:#000"></div>
<div style="left:28px;top:285px;width:630px;height:1px;background:#000"></div>
<div style="left:28px;top:306px;width:630px;height:1px;background:#000"></div>
<div style="left:28px;top:327px;width:630px;height:1px;background:#000"></div>
<div style="left:28px;top:348px;width:630px;height:1px;background:#000"></div>
<div style="left:28px;top:369px;width:630px;height:1px;background:#000"></div>
<div style="left:28px;top:390px;width:630px;height:1px;background:#000"></div>
<div style="left:28px;top:411px;width:630px;height:1px;background:#000"></div>
<div style="left:28px;top:432px;width:630px;height:1px;background:#000"></div>
<div style="left:28px;top:453px;width:630px;height:1px;background:#000"></div>
<div style="left:28px;top:474px;width:630px;height:1px;background:#000"></div>
<div style="left:28px;top:495px;width:630px;height:1px;background:#000"></div>
<div style="left:28px;top:516px;width:630px;height:1px;background:#000"></div>
<div style="left:28px;top:537px;width:630px;height:1px;background:#000"></div>
<div style="left:28px;top:558px;width:630px;height:1px;background:#000"></div>
<div style="left:28px;top:579px;width:630px;height:1px;background:#000"></div>
<div style="left:28px;top:600px;width:630px;height:1px;background:#000"></div>
<div style="left:28px;top:621px;width:630px;height:1px;background:#000"></div>
<div style="left:28px;top:642px;width:630px;height:1px;background:#000"></div>
<div style="left:28px;top:663px;width:630px;height:1px;background:#000"></div>
<div style="left:312px;top:223px;width:1px;height:442px;background:#000"></div>
<div style="left:405px;top:223px;width:1px;height:442px;background:#000"></div>
<div style="left:481px;top:223px;width:1px;height:442px;background:#000"></div>
<div style="left:571px;top:223px;width:1px;height:442px;background:#000"></div>
<div class="t" style="left:-30px;width:400px;text-align:center;top:236.67px;font-size:14.4px;color:#000;font-weight:bold;">Наименование</div>
<div class="t" style="left:158.5px;width:400px;text-align:center;top:236.67px;font-size:14.4px;color:#000;font-weight:bold;">Пол</div>
<div class="t" style="left:243px;width:400px;text-align:center;top:227.77px;font-size:14.4px;color:#000;font-weight:bold;">Продано,</div>
<div class="t" style="left:243px;width:400px;text-align:center;top:247.27px;font-size:14.4px;color:#000;font-weight:bold;">шт.</div>
<div class="t" style="left:326px;width:400px;text-align:center;top:236.67px;font-size:14.4px;color:#000;font-weight:bold;">Цена, руб.</div>
<div class="t" style="left:414.5px;width:400px;text-align:center;top:236.67px;font-size:14.4px;color:#000;font-weight:bold;">Итого</div>
<div class="t" style="left:31px;top:267.61px;font-size:14.8px;color:#000;">Кроссовки беговые, размер 35</div>
<div class="t" style="left:158.5px;width:400px;text-align:center;top:267.61px;font-size:14.8px;color:#000;">женский</div>
<div class="t" style="left:79px;width:400px;text-align:right;top:267.61px;font-size:14.8px;color:#000;">221</div>
<div class="t" style="left:169px;width:400px;text-align:right;top:267.61px;font-size:14.8px;color:#000;">3 190</div>
<div class="t" style="left:256px;width:400px;text-align:right;top:267.61px;font-size:14.8px;color:#000;">704 990</div>
<div class="t" style="left:31px;top:288.61px;font-size:14.8px;color:#000;">Кроссовки беговые, размер 39</div>
<div class="t" style="left:158.5px;width:400px;text-align:center;top:288.61px;font-size:14.8px;color:#000;">мужской</div>
<div class="t" style="left:79px;width:400px;text-align:right;top:288.61px;font-size:14.8px;color:#000;">400</div>
<div class="t" style="left:169px;width:400px;text-align:right;top:288.61px;font-size:14.8px;color:#000;">6 990</div>
<div class="t" style="left:256px;width:400px;text-align:right;top:288.61px;font-size:14.8px;color:#000;">2 796 000</div>
<div class="t" style="left:31px;top:309.61px;font-size:14.8px;color:#000;">Кроссовки для баскетбола, размер 39</div>
<div class="t" style="left:158.5px;width:400px;text-align:center;top:309.61px;font-size:14.8px;color:#000;">женский</div>
<div class="t" style="left:79px;width:400px;text-align:right;top:309.61px;font-size:14.8px;color:#000;">98</div>
<div class="t" style="left:169px;width:400px;text-align:right;top:309.61px;font-size:14.8px;color:#000;">5990</div>
<div class="t" style="left:256px;width:400px;text-align:right;top:309.61px;font-size:14.8px;color:#000;">587 020</div>
<div class="t" style="left:31px;top:330.61px;font-size:14.8px;color:#000;">Кроссовки для баскетбола, размер 43</div>
<div class="t" style="left:158.5px;width:400px;text-align:center;top:330.61px;font-size:14.8px;color:#000;">мужской</div>
<div class="t" style="left:79px;width:400px;text-align:right;top:330.61px;font-size:14.8px;color:#000;">334</div>
<div class="t" style="left:169px;width:400px;text-align:right;top:330.61px;font-size:14.8px;color:#000;">5890</div>
<div class="t" style="left:256px;width:400px;text-align:right;top:330.61px;font-size:14.8px;color:#000;">1 967 260</div>
<div class="t" style="left:31px;top:351.61px;font-size:14.8px;color:#000;">Кроссовки беговые, размер 40</div>
<div class="t" style="left:158.5px;width:400px;text-align:center;top:351.61px;font-size:14.8px;color:#000;">женский</div>
<div class="t" style="left:79px;width:400px;text-align:right;top:351.61px;font-size:14.8px;color:#000;">321</div>
<div class="t" style="left:169px;width:400px;text-align:right;top:351.61px;font-size:14.8px;color:#000;">6 490</div>
<div class="t" style="left:256px;width:400px;text-align:right;top:351.61px;font-size:14.8px;color:#000;">2 083 290</div>
<div class="t" style="left:31px;top:372.61px;font-size:14.8px;color:#000;">Кроссовки беговые, размер 40</div>
<div class="t" style="left:158.5px;width:400px;text-align:center;top:372.61px;font-size:14.8px;color:#000;">мужской</div>
<div class="t" style="left:79px;width:400px;text-align:right;top:372.61px;font-size:14.8px;color:#000;">500</div>
<div class="t" style="left:169px;width:400px;text-align:right;top:372.61px;font-size:14.8px;color:#000;">6 990</div>
<div class="t" style="left:256px;width:400px;text-align:right;top:372.61px;font-size:14.8px;color:#000;">3 495 000</div>
<div class="t" style="left:31px;top:393.61px;font-size:14.8px;color:#000;">Кроссовки беговые, размер 41</div>
<div class="t" style="left:158.5px;width:400px;text-align:center;top:393.61px;font-size:14.8px;color:#000;">мужской</div>
<div class="t" style="left:79px;width:400px;text-align:right;top:393.61px;font-size:14.8px;color:#000;">664</div>
<div class="t" style="left:169px;width:400px;text-align:right;top:393.61px;font-size:14.8px;color:#000;">6 990</div>
<div class="t" style="left:256px;width:400px;text-align:right;top:393.61px;font-size:14.8px;color:#000;">4 641 360</div>
<div class="t" style="left:31px;top:414.61px;font-size:14.8px;color:#000;">Кроссовки теннисные, размер 41</div>
<div class="t" style="left:158.5px;width:400px;text-align:center;top:414.61px;font-size:14.8px;color:#000;">мужской</div>
<div class="t" style="left:79px;width:400px;text-align:right;top:414.61px;font-size:14.8px;color:#000;">553</div>
<div class="t" style="left:169px;width:400px;text-align:right;top:414.61px;font-size:14.8px;color:#000;">7 990</div>
<div class="t" style="left:256px;width:400px;text-align:right;top:414.61px;font-size:14.8px;color:#000;">4 418 470</div>
<div class="t" style="left:31px;top:435.61px;font-size:14.8px;color:#000;">Кроссовки теннисные, размер 42</div>
<div class="t" style="left:158.5px;width:400px;text-align:center;top:435.61px;font-size:14.8px;color:#000;">мужской</div>
<div class="t" style="left:79px;width:400px;text-align:right;top:435.61px;font-size:14.8px;color:#000;">123</div>
<div class="t" style="left:169px;width:400px;text-align:right;top:435.61px;font-size:14.8px;color:#000;">7 990</div>
<div class="t" style="left:256px;width:400px;text-align:right;top:435.61px;font-size:14.8px;color:#000;">982 770</div>
<div class="t" style="left:31px;top:456.61px;font-size:14.8px;color:#000;">Кроссовки беговые, размер 42</div>
<div class="t" style="left:158.5px;width:400px;text-align:center;top:456.61px;font-size:14.8px;color:#000;">мужской</div>
<div class="t" style="left:79px;width:400px;text-align:right;top:456.61px;font-size:14.8px;color:#000;">334</div>
<div class="t" style="left:169px;width:400px;text-align:right;top:456.61px;font-size:14.8px;color:#000;">6 990</div>
<div class="t" style="left:256px;width:400px;text-align:right;top:456.61px;font-size:14.8px;color:#000;">2 334 660</div>
<div class="t" style="left:31px;top:477.61px;font-size:14.8px;color:#000;">Кроссовки беговые, размер 44</div>
<div class="t" style="left:158.5px;width:400px;text-align:center;top:477.61px;font-size:14.8px;color:#000;">мужской</div>
<div class="t" style="left:79px;width:400px;text-align:right;top:477.61px;font-size:14.8px;color:#000;">222</div>
<div class="t" style="left:169px;width:400px;text-align:right;top:477.61px;font-size:14.8px;color:#000;">6 990</div>
<div class="t" style="left:256px;width:400px;text-align:right;top:477.61px;font-size:14.8px;color:#000;">1 551 780</div>
<div class="t" style="left:31px;top:498.61px;font-size:14.8px;color:#000;">Кроссовки беговые, размер 45</div>
<div class="t" style="left:158.5px;width:400px;text-align:center;top:498.61px;font-size:14.8px;color:#000;">мужской</div>
<div class="t" style="left:79px;width:400px;text-align:right;top:498.61px;font-size:14.8px;color:#000;">221</div>
<div class="t" style="left:169px;width:400px;text-align:right;top:498.61px;font-size:14.8px;color:#000;">6 990</div>
<div class="t" style="left:256px;width:400px;text-align:right;top:498.61px;font-size:14.8px;color:#000;">1 544 790</div>
<div class="t" style="left:31px;top:519.61px;font-size:14.8px;color:#000;">Кроссовки теннисные, размер 38</div>
<div class="t" style="left:158.5px;width:400px;text-align:center;top:519.61px;font-size:14.8px;color:#000;">женский</div>
<div class="t" style="left:79px;width:400px;text-align:right;top:519.61px;font-size:14.8px;color:#000;">443</div>
<div class="t" style="left:169px;width:400px;text-align:right;top:519.61px;font-size:14.8px;color:#000;">7 990</div>
<div class="t" style="left:256px;width:400px;text-align:right;top:519.61px;font-size:14.8px;color:#000;">3 539 570</div>
<div class="t" style="left:31px;top:540.61px;font-size:14.8px;color:#000;">Кроссовки беговые, размер 35</div>
<div class="t" style="left:158.5px;width:400px;text-align:center;top:540.61px;font-size:14.8px;color:#000;">женский</div>
<div class="t" style="left:79px;width:400px;text-align:right;top:540.61px;font-size:14.8px;color:#000;">241</div>
<div class="t" style="left:169px;width:400px;text-align:right;top:540.61px;font-size:14.8px;color:#000;">6 490</div>
<div class="t" style="left:256px;width:400px;text-align:right;top:540.61px;font-size:14.8px;color:#000;">1 564 090</div>
<div class="t" style="left:31px;top:561.61px;font-size:14.8px;color:#000;">Кроссовки теннисные, размер 43</div>
<div class="t" style="left:158.5px;width:400px;text-align:center;top:561.61px;font-size:14.8px;color:#000;">мужской</div>
<div class="t" style="left:79px;width:400px;text-align:right;top:561.61px;font-size:14.8px;color:#000;">543</div>
<div class="t" style="left:169px;width:400px;text-align:right;top:561.61px;font-size:14.8px;color:#000;">7 990</div>
<div class="t" style="left:256px;width:400px;text-align:right;top:561.61px;font-size:14.8px;color:#000;">4 338 570</div>
<div class="t" style="left:31px;top:582.61px;font-size:14.8px;color:#000;">Кроссовки беговые, размер 36</div>
<div class="t" style="left:158.5px;width:400px;text-align:center;top:582.61px;font-size:14.8px;color:#000;">женский</div>
<div class="t" style="left:79px;width:400px;text-align:right;top:582.61px;font-size:14.8px;color:#000;">332</div>
<div class="t" style="left:169px;width:400px;text-align:right;top:582.61px;font-size:14.8px;color:#000;">6 490</div>
<div class="t" style="left:256px;width:400px;text-align:right;top:582.61px;font-size:14.8px;color:#000;">2 154 680</div>
<div class="t" style="left:31px;top:603.61px;font-size:14.8px;color:#000;">Кроссовки беговые, размер 37</div>
<div class="t" style="left:158.5px;width:400px;text-align:center;top:603.61px;font-size:14.8px;color:#000;">женский</div>
<div class="t" style="left:79px;width:400px;text-align:right;top:603.61px;font-size:14.8px;color:#000;">333</div>
<div class="t" style="left:169px;width:400px;text-align:right;top:603.61px;font-size:14.8px;color:#000;">6 490</div>
<div class="t" style="left:256px;width:400px;text-align:right;top:603.61px;font-size:14.8px;color:#000;">2 161 170</div>
<div class="t" style="left:31px;top:624.61px;font-size:14.8px;color:#000;">Кроссовки беговые, размер 38</div>
<div class="t" style="left:158.5px;width:400px;text-align:center;top:624.61px;font-size:14.8px;color:#000;">женский</div>
<div class="t" style="left:79px;width:400px;text-align:right;top:624.61px;font-size:14.8px;color:#000;">421</div>
<div class="t" style="left:169px;width:400px;text-align:right;top:624.61px;font-size:14.8px;color:#000;">6 490</div>
<div class="t" style="left:256px;width:400px;text-align:right;top:624.61px;font-size:14.8px;color:#000;">2 732 290</div>
<div class="t" style="left:31px;top:645.61px;font-size:14.8px;color:#000;">Кроссовки беговые, размер 38</div>
<div class="t" style="left:158.5px;width:400px;text-align:center;top:645.61px;font-size:14.8px;color:#000;">мужской</div>
<div class="t" style="left:79px;width:400px;text-align:right;top:645.61px;font-size:14.8px;color:#000;">220</div>
<div class="t" style="left:169px;width:400px;text-align:right;top:645.61px;font-size:14.8px;color:#000;">6 990</div>
<div class="t" style="left:256px;width:400px;text-align:right;top:645.61px;font-size:14.8px;color:#000;">1 537 800</div>
<div style="left:26px;top:221px;width:634px;height:444px;border:2px solid #006b35;border-bottom:none;box-sizing:border-box"></div>
<div style="left:28px;top:223px;width:630px;height:1px;background:#fff"></div>
<div style="left:28px;top:223px;width:1px;height:442px;background:#fff"></div>
<div style="left:657px;top:223px;width:1px;height:442px;background:#fff"></div>
<div style="left:0px;top:665px;width:1050px;height:1px;background:#a8a89c"></div>
<div style="left:1050px;top:202px;width:20px;height:463px;background:#e6e6e6"></div>
<div style="left:1050px;top:222px;width:1px;height:443px;background:#a8a89c"></div>
<div style="left:1048px;top:217px;width:2px;height:1px;background:#222"></div>
<div style="left:1054px;top:204px;width:15px;height:15px;background:#fff;border:1px solid #b0b0a8;box-sizing:border-box"></div>
<svg style="position:absolute;left:1058px;top:209px" width="7" height="4" viewBox="0 0 7 4"><path d="M0 4h7L3.5 0z" fill="#666"/></svg>
<div style="left:1054px;top:218px;width:15px;height:198px;background:#fff;border:1px solid #b0b0a8;box-sizing:border-box"></div>
<div style="left:1054px;top:416px;width:15px;height:235px;background:repeating-conic-gradient(#c6c6c6 0 25%, #e9e9e9 0 50%) 0 0/2px 2px"></div>
<div style="left:1054px;top:651px;width:15px;height:15px;background:#fff;border:1px solid #b0b0a8;box-sizing:border-box"></div>
<svg style="position:absolute;left:1058px;top:656px" width="7" height="4" viewBox="0 0 7 4"><path d="M0 0h7L3.5 4z" fill="#666"/></svg>
<div style="left:0px;top:666px;width:1070px;height:27px;background:#e6e6e6"></div>
<svg style="position:absolute;left:25px;top:674px" width="6" height="9" viewBox="0 0 6 9"><path d="M5 0v9L0 4.5z" fill="#bdbdbd"/></svg>
<svg style="position:absolute;left:54px;top:674px" width="6" height="9" viewBox="0 0 6 9"><path d="M0 0v9L5 4.5z" fill="#bdbdbd"/></svg>
<div style="left:99px;top:665px;width:107px;height:25px;background:#fff;border-left:1px solid #c8c8c8;border-right:1px solid #c8c8c8;box-sizing:border-box"></div>
<div style="left:99px;top:688px;width:107px;height:2px;background:#0b6b38"></div>
<div class="t" style="left:-47.5px;width:400px;text-align:center;top:671.3000000000001px;font-size:12.6px;color:#0b6236;font-weight:bold;">microexcel.ru</div>
<svg style="position:absolute;left:239px;top:671px" width="16" height="16" viewBox="0 0 16 16"><circle cx="8" cy="8" r="7.2" fill="none" stroke="#777" stroke-width="1.3"/><path d="M8 4v8M4 8h8" stroke="#777" stroke-width="1.5"/></svg>
<div style="left:643px;top:674px;width:2px;height:2px;background:#b0b0b0"></div>
<div style="left:643px;top:678px;width:2px;height:2px;background:#b0b0b0"></div>
<div style="left:643px;top:682px;width:2px;height:2px;background:#b0b0b0"></div>
<div style="left:660px;top:672px;width:392px;height:15px;background:#fff;border:1px solid #b0b0a8;box-sizing:border-box"></div>
<div style="left:660px;top:672px;width:15px;height:15px;background:#fff;border:1px solid #b0b0a8;box-sizing:border-box"></div>
<svg style="position:absolute;left:665px;top:676px" width="5" height="8" viewBox="0 0 5 8"><path d="M5 0v8L0 4z" fill="#555"/></svg>
<div style="left:995px;top:673px;width:43px;height:13px;background:repeating-conic-gradient(#c6c6c6 0 25%, #e9e9e9 0 50%) 0 0/2px 2px"></div>
<div style="left:1038px;top:672px;width:14px;height:15px;background:#fff;border:1px solid #b0b0a8;box-sizing:border-box"></div>
<svg style="position:absolute;left:1043px;top:676px" width="5" height="8" viewBox="0 0 5 8"><path d="M0 0v8L5 4z" fill="#555"/></svg>
<div style="left:0px;top:693px;width:1070px;height:22px;background:#f3f3f3"></div>
<div style="left:0px;top:693px;width:1070px;height:1px;background:#dadada"></div>
<div class="t" style="left:6.3px;top:697.77px;font-size:11.3px;color:#262626;">Готово</div>
<svg style="position:absolute;left:62px;top:696px" width="15" height="15" viewBox="0 0 15 15"><circle cx="4" cy="3.9" r="2.8" fill="#6b5f3f"/><path d="M2.2 8.2V13.6H13.5V2.6" fill="none" stroke="#6b5f3f" stroke-width="1.1"/><rect x="8.2" y="2.2" width="5.8" height="2.3" fill="#6b5f3f"/><rect x="7.1" y="6.9" width="1.8" height="1.1" rx="0.5" fill="#6b5f3f"/><rect x="10.1" y="6.9" width="1.8" height="1.1" rx="0.5" fill="#6b5f3f"/><rect x="4.1" y="8.9" width="1.8" height="1.1" rx="0.5" fill="#6b5f3f"/><rect x="7.1" y="8.9" width="1.8" height="1.1" rx="0.5" fill="#6b5f3f"/><rect x="10.1" y="8.9" width="1.8" height="1.1" rx="0.5" fill="#6b5f3f"/><rect x="4.1" y="10.9" width="1.8" height="1.1" rx="0.5" fill="#6b5f3f"/><rect x="7.1" y="10.9" width="1.8" height="1.1" rx="0.5" fill="#6b5f3f"/><rect x="10.1" y="10.9" width="1.8" height="1.1" rx="0.5" fill="#6b5f3f"/></svg>
<div class="t" style="left:434.3px;top:698.04px;font-size:11px;color:#262626;">Среднее: 768866,95</div>
<div class="t" style="left:564px;top:698.04px;font-size:11px;color:#262626;">Количество: 205</div>
<div class="t" style="left:666.3px;top:698.04px;font-size:11px;color:#262626;">Сумма: 92264034</div>
<div style="left:772px;top:694px;width:38px;height:21px;background:#c6c6c6"></div>
<svg style="position:absolute;left:784px;top:697px" width="14" height="14" viewBox="0 0 14 14"><path d="M0.5 0.5h13v13h-13zM4.5 0.5v13M9 0.5v13M0.5 4.5h13M0.5 9h13" fill="none" stroke="#767676" stroke-width="1"/></svg>
<svg style="position:absolute;left:822px;top:697px" width="14" height="14" viewBox="0 0 14 14"><rect x="0.5" y="0.5" width="13" height="13" fill="none" stroke="#767676"/><rect x="3.5" y="3.5" width="7" height="7" fill="none" stroke="#767676"/><path d="M5 5.5h4M5 7h4M5 8.5h4" stroke="#767676" stroke-width="0.8"/></svg>
<svg style="position:absolute;left:860px;top:697px" width="14" height="14" viewBox="0 0 14 14"><path d="M0.5 0.5v13h13v-13zM0.5 6.5h5v-6M8.5 0.5v6" fill="none" stroke="#767676"/></svg>
<div style="left:891px;top:704px;width:6px;height:2px;background:#444"></div>
<div style="left:901px;top:704px;width:100px;height:1px;background:#999"></div>
<div style="left:949px;top:698px;width:5px;height:11px;background:#666"></div>
<svg style="position:absolute;left:1004px;top:699px" width="9" height="9" viewBox="0 0 9 9"><path d="M4.5 0v9M0 4.5h9" stroke="#444" stroke-width="1.6"/></svg>
<div class="t" style="left:1023px;top:698.23px;font-size:10.8px;color:#262626;">100 %</div>
<div style="left:312px;top:135px;width:97px;height:51px;background:#fff;border:1px solid #c8c8c8;box-sizing:border-box;box-shadow:1px 1px 2px rgba(0,0,0,0.1)"></div>
<svg style="position:absolute;left:317px;top:140px" width="18" height="18" viewBox="0 0 18 18"><path d="M4.6 14.8H1.2V1.2H8.4L11.8 4.6V7.2" fill="none" stroke="#6a6a6a" stroke-width="1.1"/><path d="M8.4 1.2V4.6H11.8" fill="none" stroke="#6a6a6a" stroke-width="1.1"/><path d="M6.8 3.2H3.4V12.8H5" fill="none" stroke="#2b93cf" stroke-width="1.2"/><rect x="9.3" y="7.3" width="4.4" height="3.3" fill="#fff" stroke="#6a6a6a" stroke-width="1.1"/><path d="M7 10.3h9a0.8 0.8 0 0 1 0.8 0.8v3.6H6.2v-3.6a0.8 0.8 0 0 1 0.8-0.8z" fill="#6a6a6a"/><rect x="9.3" y="13.8" width="4.4" height="3" fill="#fff" stroke="#6a6a6a" stroke-width="1.1"/></svg>
<div class="t" style="left:346px;top:142.79px;font-size:11.5px;color:#646464;"><u>З</u>адать</div>
<div style="left:312px;top:161px;width:96px;height:24px;background:#c6c6c6;border-radius:9px"></div>
<div class="t" style="left:346px;top:166.59px;font-size:11.5px;color:#262626;"><u>У</u>брать</div>
<div style="left:311px;top:160px;width:98px;height:26px;border:3px solid #ff0000;border-radius:10px;box-sizing:border-box"></div>
<div style="left:309px;top:66px;width:57px;height:72px;border:3px solid #ff0000;border-radius:9px;box-sizing:border-box"></div>
</body></html>
